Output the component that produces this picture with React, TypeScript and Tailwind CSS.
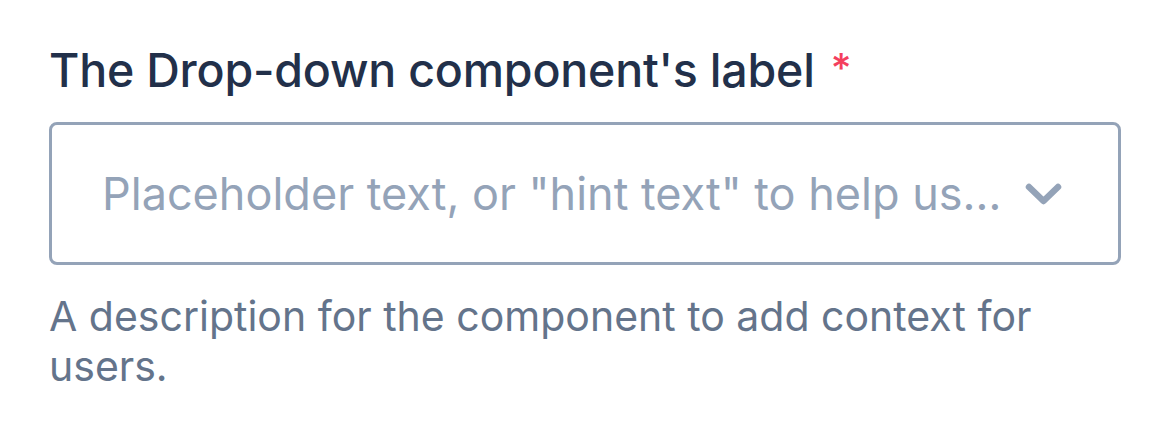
// Form field: a select with label, required mark and helper text
export default function App() {
  return (
    <div
      className="min-h-[441px] w-[1170px] bg-white pl-[49px] pr-[49px] pt-[38px]"
      style={{ fontFamily: "Inter, 'Noto Sans', sans-serif" }}
    >
      <label className="flex items-start text-[46.5px] font-medium leading-[64px] tracking-[-0.2px] text-[#22304a]">
        <span>The Drop-down component's label</span>
        <span className="ml-[16px] mt-[-2px] text-[40px] text-[#f43f5e]">*</span>
      </label>

      <div className="mt-[20px] flex h-[143px] w-full items-center rounded-[8px] border-[3px] border-[#94a3b8] bg-white pl-[50px] pr-[56px]">
        <span className="min-w-0 flex-1 whitespace-nowrap text-[45px] leading-[56px] text-[#94a3b8]">
          Placeholder text, or "hint text" to help us…
        </span>
        <svg
          className="h-[22px] w-[37px] shrink-0"
          viewBox="0 0 37 22"
          fill="none"
          stroke="#94a3b8"
          strokeWidth={6.5}
          strokeLinecap="round"
          strokeLinejoin="round"
        >
          <path d="M4 4 L18.5 18 L33 4" />
        </svg>
      </div>

      <p className="mt-[26px] pr-[60px] text-[41px] leading-[50px] text-[#64748b]">
        A description for the component to add context for users.
      </p>
    </div>
  );
}
